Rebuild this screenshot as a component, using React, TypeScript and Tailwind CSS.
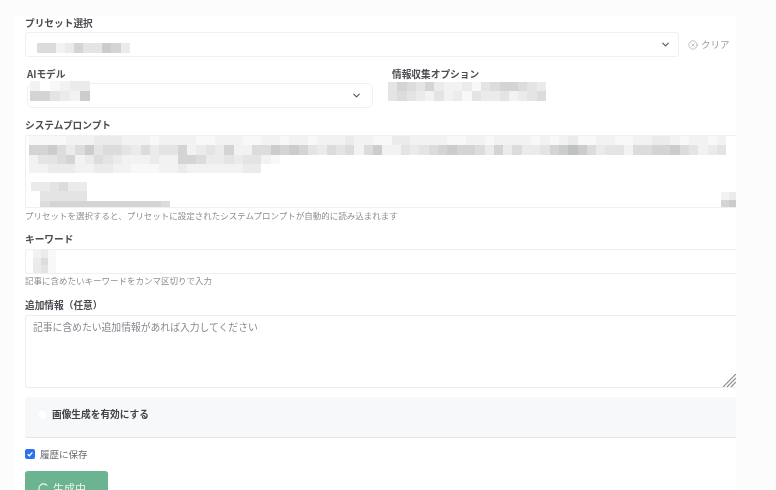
import { ChevronDown, CircleX } from "lucide-react";

const greys: Record<string, string> = {
  "0": "#ffffff",
  "1": "#f8f8f8",
  "2": "#f2f2f2",
  "3": "#ebebeb",
  "4": "#e4e4e4",
  "5": "#dcdcdc",
  "6": "#d4d4d4",
  "7": "#cbcccc",
  "8": "#bec2c2",
};

// pixelated (redacted) text: every character is one cell of the mosaic
function Mosaic({ rows, cell = 9.3 }: { rows: string[]; cell?: number }) {
  return (
    <div className="flex flex-col">
      {rows.map((row, i) => (
        <div key={i} className="flex">
          {row.split("").map((c, j) => (
            <div
              key={j}
              className="shrink-0"
              style={{ width: cell, height: cell, background: greys[c] }}
            />
          ))}
        </div>
      ))}
    </div>
  );
}

function Label({ children, className = "" }: { children: string; className?: string }) {
  return (
    <div className={`text-[9.7px] leading-[14px] font-bold text-[#4a4d52] ${className}`}>
      {children}
    </div>
  );
}

function Hint({ children }: { children: string }) {
  return <div className="text-[8.5px] leading-[12px] text-[#8b8f94]">{children}</div>;
}

export default function App() {
  return (
    <div
      className="h-[490px] w-[776px] overflow-hidden bg-[#fcfcfc] pt-[16px] pl-[15px] blur-[0.45px]"
      style={{ fontFamily: '"Noto Sans CJK JP", "Liberation Sans", sans-serif' }}
    >
      <div className="h-[474px] w-[721px] overflow-hidden bg-white pl-[10px]">
        {/* Preset */}
        <Label>プリセット選択</Label>
        <div className="mt-[2px] flex items-center">
          <div className="flex h-[25px] w-[654px] items-center justify-between rounded-[3px] border border-[#f0f0f0] pr-[7px] pl-[11px]">
            <div className="mt-[7px]">
              <Mosaic rows={["5523644763"]} />
            </div>
            <ChevronDown className="h-[11px] w-[11px] text-[#555]" strokeWidth={2.5} />
          </div>
          <div className="ml-[9px] flex items-center gap-[3px] text-[9.5px] text-[#9a9ea3]">
            <CircleX className="h-[10px] w-[10px]" strokeWidth={1.5} />
            <span>クリア</span>
          </div>
        </div>

        {/* Model + options */}
        <div className="mt-[10px] flex">
          <div className="ml-[2px] w-[346px]">
            <Label>AIモデル</Label>
            <div className="mt-[2px] flex h-[25px] items-center justify-between rounded-[6px] border border-[#f0f0f0] pr-[10px] pl-[2px]">
              <div className="mb-[9px]">
                <Mosaic rows={["201233", "664327"]} cell={10} />
              </div>
              <ChevronDown className="h-[11px] w-[11px] text-[#555]" strokeWidth={2.5} />
            </div>
          </div>
          <div className="ml-[15px]">
            <Label className="ml-[4px]">情報収集オプション</Label>
            <div className="mt-[1px]">
              <Mosaic rows={["46546322314566543", "45432423143342345"]} />
            </div>
          </div>
        </div>

        {/* System prompt */}
        <Label className="mt-[10px]">システムプロンプト</Label>
        <div className="relative mt-[3px] h-[73px] overflow-hidden rounded-tl-[3px] border-t border-b border-l border-[#f0f0f0] pl-[3px]">
          <Mosaic
            rows={[
              "1111222333222122221122211221221222322113322221122122221212311221122332122120",
              "66753574554353446234362255767643545257224345676653635334678753442556675423405",
              "244562354322232266533434421000000000000000000000000000000000000000000000",
              "223332233221112232222223300000000000000000000000000000000000000000000000",
            ]}
          />
          <div className="mt-[9px] ml-[2px]">
            <Mosaic rows={["334533", "044444"]} />
          </div>
          <div className="ml-[2px]">
            <Mosaic rows={["0566666666666650"]} />
          </div>
          <div className="absolute right-0 bottom-0">
            <Mosaic rows={["23", "67"]} cell={7.5} />
          </div>
        </div>
        <div className="mt-[1px]">
          <Hint>プリセットを選択すると、プリセットに設定されたシステムプロンプトが自動的に読み込まれます</Hint>
        </div>

        {/* Keywords */}
        <Label className="mt-[11px]">キーワード</Label>
        <div className="mt-[3px] h-[25px] rounded-l-[3px] border-t border-b border-l border-[#f0f0f0] pl-[7px]">
          <Mosaic rows={["2310", "3510", "3410"]} cell={7.5} />
        </div>
        <Hint>記事に含めたいキーワードをカンマ区切りで入力</Hint>

        {/* Extra info */}
        <Label className="mt-[12px]">追加情報（任意）</Label>
        <div className="relative mt-[3px] h-[73px] rounded-l-[3px] border-t border-b border-l border-[#eeeeee] pt-[4px] pl-[7px] text-[9.8px] leading-[14px] text-[#85898e]">
          記事に含めたい追加情報があれば入力してください
          <svg className="absolute right-0 bottom-0 h-[13px] w-[13px] text-[#8a8a8a]" viewBox="0 0 13 13">
            <path d="M0 13 13 0M4 13 13 4M8 13 13 8" stroke="currentColor" strokeWidth="1.2" fill="none" />
          </svg>
        </div>

        {/* Image generation */}
        <div className="mt-[9px] flex h-[41px] items-center rounded-l-[3px] border-b border-[#e4e4e4] bg-[#f7f8fa] pb-[5px] pl-[14px]">
          <div className="h-[8px] w-[7px] rounded-[2px] bg-white" />
          <span className="ml-[6px] text-[9.7px] font-bold text-[#3f4247]">画像生成を有効にする</span>
        </div>

        {/* Save to history */}
        <div className="mt-[9px] flex items-center gap-[5px]">
          <div className="flex h-[10px] w-[10px] items-center justify-center rounded-[2px] bg-[#2b72f0]">
            <svg viewBox="0 0 10 10" className="h-[8px] w-[8px]">
              <path d="M2 5.2 4.2 7.2 8 3" stroke="#fff" strokeWidth="1.6" fill="none" />
            </svg>
          </div>
          <span className="text-[9.5px] text-[#666a6f]">履歴に保存</span>
        </div>

        {/* Submit */}
        <div className="mt-[10px] flex h-[34px] w-[83px] items-center justify-center gap-[4px] rounded-[3px] bg-[#6bb391] text-[11px] text-[#eef6f2]">
          <svg viewBox="0 0 12 12" className="h-[11px] w-[11px]">
            <path d="M10 3A5 5 0 1 0 10 9" stroke="currentColor" strokeWidth="1.3" fill="none" />
          </svg>
          <span>生成中...</span>
        </div>
      </div>
    </div>
  );
}
